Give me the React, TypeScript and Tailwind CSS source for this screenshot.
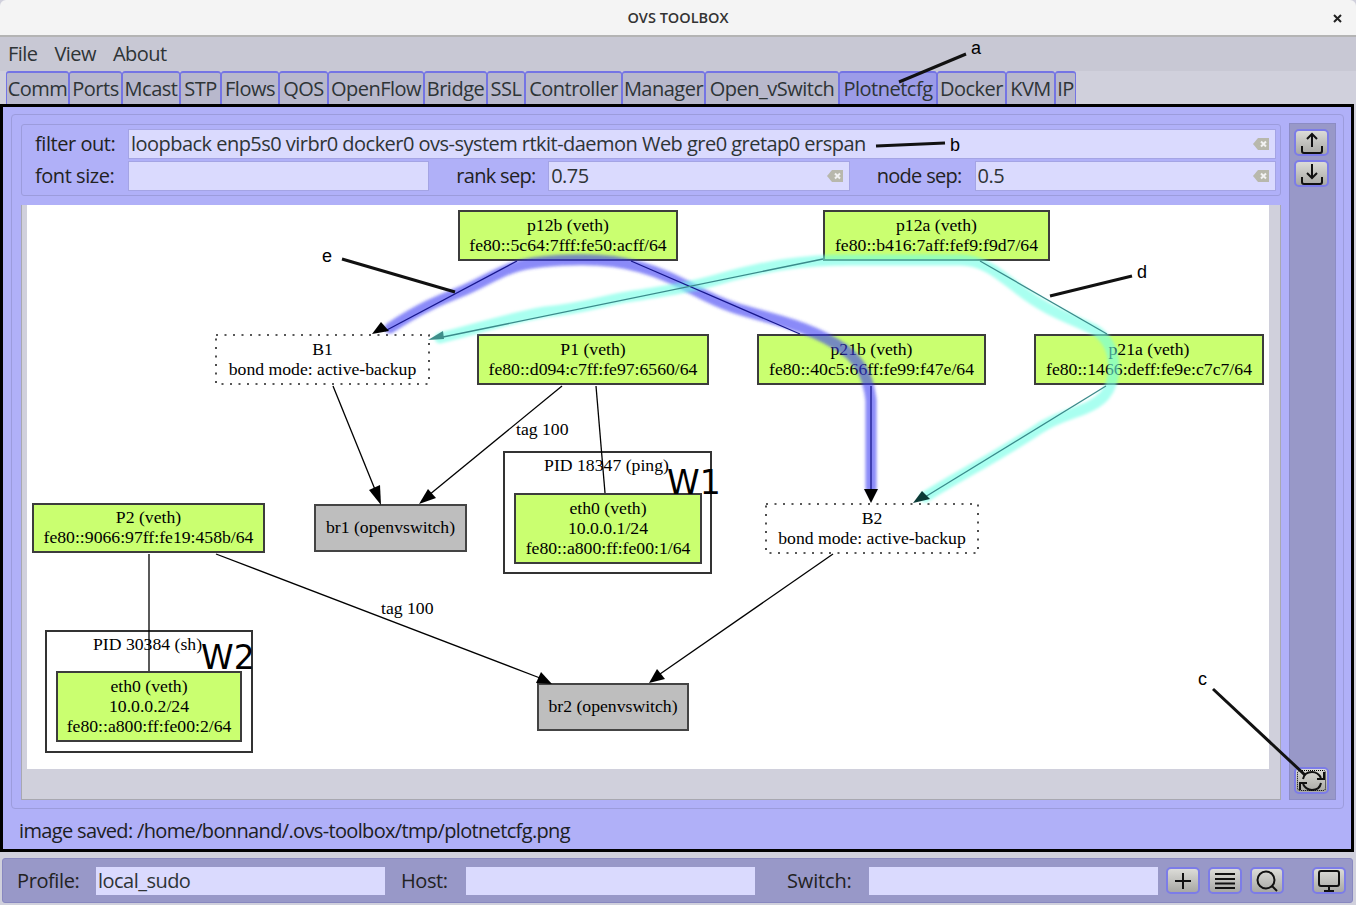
import React from "react";

const ui = "font-['Open_Sans',sans-serif]";
const serif = "text-[17.7px] leading-[20px] text-black font-['Liberation_Serif',serif]";
const tabs: [string, string, boolean?][] = [
  ["Comm", "w-[63px]"], ["Ports", "w-[53px]"], ["Mcast", "w-[58px]"], ["STP", "w-[41px]"], ["Flows", "w-[58px]"],
  ["QOS", "w-[49px]"], ["OpenFlow", "w-[96px]"], ["Bridge", "w-[63px]"], ["SSL", "w-[38px]"], ["Controller", "w-[97px]"],
  ["Manager", "w-[83px]"], ["Open_vSwitch", "w-[134px]"], ["Plotnetcfg", "w-[98px]", true], ["Docker", "w-[69px]"], ["KVM", "w-[49px]"], ["IP", "w-[21px]"],
];

function Clear() {
  return (
    <svg width="16" height="12" viewBox="0 0 16 12" className="absolute right-[6px] top-1/2 -translate-y-1/2">
      <path d="M5 0H16V12H5L0 6Z" fill="#b8b8ac" />
      <path d="M8 3.5L13 8.5M13 3.5L8 8.5" stroke="#f2f2f2" strokeWidth="2" />
    </svg>
  );
}

function Field({ w, value, clear = true, h = "h-[30px]", edge = "border border-[#a4a4e4]" }: { w: string; value?: string; clear?: boolean; h?: string; edge?: string }) {
  return (
    <div className={`relative ${w} ${h} bg-[#dadafe] ${edge} pl-[2px] text-[20px] leading-[28px] text-[#2e3436] ${ui} whitespace-nowrap tracking-[-0.53px]`}>
      {value}
      {clear && <Clear />}
    </div>
  );
}

function IconBtn({ w = "w-[35px]", h = "h-[27px]", focus, children }: { w?: string; h?: string; focus?: boolean; children: React.ReactNode }) {
  return (
    <div className={`${w} ${h} rounded-[5px] border-2 border-[#7c7ce8] bg-gradient-to-b from-[#dcdcd8] to-[#a8a8a4] flex items-center justify-center relative`}>
      {focus && <div className="absolute inset-[1px] border border-dotted border-black rounded-[3px]" />}
      {children}
    </div>
  );
}

function Node({ pos, kind = "green", title, lines, w = 0, h = 0 }: { pos: string; kind?: "green" | "gray" | "dot"; title: string; lines?: string[]; w?: number; h?: number }) {
  const k =
    kind === "green"
      ? "bg-[#caff70] border-2 border-[#3c3c3c]"
      : kind === "gray"
      ? "bg-[#bebebe] border-2 border-[#444]"
      : "";
  return (
    <div className={`absolute ${pos} ${k} flex flex-col items-center justify-center pb-[2px] ${serif} whitespace-nowrap`}>
      {kind === "dot" && (
        <svg className="absolute inset-0" width={w} height={h} fill="none">
          <rect x="1" y="1" width={w - 2} height={h - 2} stroke="#222" strokeWidth="1.6" strokeDasharray="2 6.5" />
        </svg>
      )}
      <div>{title}</div>
      {lines?.map((l) => <div key={l}>{l}</div>)}
    </div>
  );
}

function Graph() {
  return (
    <div className="relative w-[1242px] h-[564px] bg-white overflow-hidden">
      {/* cluster boxes */}
      <div className="absolute left-[476px] top-[246px] w-[209px] h-[123px] border-2 border-[#333]" />
      <div className="absolute left-[18px] top-[425px] w-[208px] h-[123px] border-2 border-[#333]" />
      <div className={`absolute left-[477px] top-[250px] w-[205px] text-center ${serif}`}>PID 18347 (ping)</div>
      <div className={`absolute left-[18px] top-[429px] w-[205px] text-center ${serif}`}>PID 30384 (sh)</div>
      <div className="absolute left-[640px] top-[255px] text-[33px] leading-[46px] font-['DejaVu_Sans',sans-serif] text-black z-10">W1</div>
      <div className="absolute left-[174px] top-[430px] text-[33px] leading-[46px] font-['DejaVu_Sans',sans-serif] text-black z-10">W2</div>

      <Node pos="left-[431px] top-[5px] w-[220px] h-[51px]" title="p12b (veth)" lines={["fe80::5c64:7fff:fe50:acff/64"]} />
      <Node pos="left-[796px] top-[5px] w-[227px] h-[51px]" title="p12a (veth)" lines={["fe80::b416:7aff:fef9:f9d7/64"]} />
      <Node pos="left-[188px] top-[129px] w-[215px] h-[51px]" kind="dot" w={215} h={51} title="B1" lines={["bond mode: active-backup"]} />
      <Node pos="left-[450px] top-[129px] w-[232px] h-[51px]" title="P1 (veth)" lines={["fe80::d094:c7ff:fe97:6560/64"]} />
      <Node pos="left-[730px] top-[129px] w-[229px] h-[51px]" title="p21b (veth)" lines={["fe80::40c5:66ff:fe99:f47e/64"]} />
      <Node pos="left-[1007px] top-[129px] w-[230px] h-[51px]" title="p21a (veth)" lines={["fe80::1466:deff:fe9e:c7c7/64"]} />
      <Node pos="left-[487px] top-[288px] w-[188px] h-[71px]" title="eth0 (veth)" lines={["10.0.0.1/24", "fe80::a800:ff:fe00:1/64"]} />
      <Node pos="left-[287px] top-[299px] w-[153px] h-[48px]" kind="gray" title="br1 (openvswitch)" />
      <Node pos="left-[5px] top-[298px] w-[233px] h-[50px]" title="P2 (veth)" lines={["fe80::9066:97ff:fe19:458b/64"]} />
      <Node pos="left-[738px] top-[298px] w-[214px] h-[51px]" kind="dot" w={214} h={51} title="B2" lines={["bond mode: active-backup"]} />
      <Node pos="left-[29px] top-[466px] w-[186px] h-[71px]" title="eth0 (veth)" lines={["10.0.0.2/24", "fe80::a800:ff:fe00:2/64"]} />
      <Node pos="left-[510px] top-[478px] w-[152px] h-[48px]" kind="gray" title="br2 (openvswitch)" />

      <div className={`absolute left-[489px] top-[214px] ${serif}`}>tag 100</div>
      <div className={`absolute left-[354px] top-[393px] ${serif}`}>tag 100</div>

      <svg className="absolute inset-0 z-20" width="1242" height="564" viewBox="27 205 1242 564" fill="none">
        <defs>
          <filter id="soft" x="-10%" y="-10%" width="120%" height="120%"><feGaussianBlur stdDeviation="1.4" /></filter>
        </defs>
        <g stroke="#000" strokeWidth="1.3">
          <path d="M333 386L376 492" />
          <path d="M562 386L429 495" />
          <path d="M596 386L605 493" />
          <path d="M149 554V671" />
          <path d="M216 554L540 678" />
          <path d="M833 554L660 674" />
        </g>
        <g fill="#000">
          <path d="M381 505L369 490L380 485Z" />
          <path d="M419 504L428 489L436 498Z" />
          <path d="M552 684L536 683L541 672Z" />
          <path d="M649 683L657 669L665 679Z" />
        </g>
        <path d="M390 328C420 308 440 300 460 292C490 280 505 265 540 262C570 259 610 258 640 267C680 278 700 297 735 308C770 319 810 325 845 350C860 362 868 375 871 400V488" stroke="#3c3cf3" strokeOpacity="0.6" strokeWidth="11" filter="url(#soft)" strokeLinecap="round" />
        <path d="M440 338C480 328 510 318 545 312C590 308 610 298 640 295C670 290 690 288 730 276C770 266 800 260 850 260H960C985 260 1000 275 1020 290C1045 310 1070 318 1095 330C1118 345 1118 378 1105 395C1090 412 1065 412 1040 428C1000 455 960 475 925 497" stroke="#71ffe6" strokeOpacity="0.6" strokeWidth="11" filter="url(#soft)" strokeLinecap="round" />
        <g stroke="#17178c" strokeWidth="1.3">
          <path d="M517 261L385 331" />
          <path d="M631 261L800 334" />
          <path d="M871 386V490" />
        </g>
        <path d="M372 334L381 322L389 331Z" fill="#000" />
        <path d="M864 489H878L871 503Z" fill="#000" />
        <g stroke="#3a8a8a" strokeWidth="1.3">
          <path d="M823 259L443 337" />
          <path d="M980 261L1107 334" />
          <path d="M1106 386L925 497" />
        </g>
        <path d="M428 340L443 331L444 339Z" fill="#3e8e8a" />
        <path d="M913 503L922 491L930 499Z" fill="#0b3a36" />
      </svg>
    </div>
  );
}

export default function App() {
  return (
    <div className={`relative w-[1356px] h-[905px] overflow-hidden bg-[#d0d0dc] ${ui} text-[#2e3436]`}>
      {/* title bar */}
      <div className="relative h-[37px] bg-[#f4f4f4] border-b-2 border-[#b4b4b4] flex items-center justify-center rounded-t-[6px]">
        <span className="text-[14.5px] font-semibold text-[#333]">OVS TOOLBOX</span>
        <svg className="absolute right-[14px] top-[14px]" width="9" height="9" viewBox="0 0 9 9"><path d="M1 1L8 8M8 1L1 8" stroke="#222" strokeWidth="2" /></svg>
      </div>
      {/* menu */}
      <div className="h-[34px] bg-[#c8c8d4] flex items-center pl-[8px] gap-[17px] text-[20px] tracking-[-0.55px]">
        <span>File</span><span>View</span><span>About</span>
      </div>
      {/* tabs */}
      <div className="h-[33px] pl-[6px] flex items-end">
        {tabs.map(([t, w, active]) => (
          <div key={t} className={`${w} h-[33px] shrink-0 border-x border-t-2 border-[#7474e4] rounded-t-[3px] flex items-center justify-center text-[20px] tracking-[-0.5px] whitespace-nowrap ${active ? "bg-[#9c9ce8]" : "bg-[#b8b8cc]"}`}>{t}</div>
        ))}
      </div>
      {/* main panel */}
      <div className="w-[1354px] h-[748px] border-[3px] border-black bg-[#b0b0f8] pl-[8px] pt-[7px]">
        <div className="w-[1333px] h-[695px] border border-[#9c9cdc] rounded-[4px] pl-[9px] pt-[9px] flex gap-[8px]">
          <div className="w-[1260px] flex flex-col gap-[9px]">
            <div className="h-[72px] border border-[#9c9cdc] rounded-[3px] pl-[13px] pr-[4px] pt-[4px] flex flex-col gap-[2px] text-[20px] text-[#222] tracking-[-0.45px]">
              <div className="flex items-center h-[30px]">
                <span className="w-[93px]">filter out:</span>
                <Field w="w-[1148px]" value="loopback enp5s0 virbr0 docker0 ovs-system rtkit-daemon Web gre0 gretap0 erspan" />
              </div>
              <div className="flex items-center h-[30px]">
                <span className="w-[93px]">font size:</span>
                <Field w="w-[302px]" clear={false} />
                <span className="ml-[27px] w-[92px] tracking-[-0.7px]">rank sep:</span>
                <Field w="w-[302px]" value="0.75" />
                <span className="ml-[27px] w-[98px] tracking-[-0.7px]">node sep:</span>
                <Field w="w-[302px]" value="0.5" />
              </div>
            </div>
            <div className="h-[595px] bg-[#d0d0dc] border-r border-b border-l border-[#a8a8b0] pl-[5px]">
              <Graph />
            </div>
          </div>
          <div className="w-[47px] h-[677px] -mt-[1px] bg-[#9898c8] border border-[#8c8cc4] pt-[5px] pl-[4px] flex flex-col">
            <div className="flex flex-col gap-[4px]">
              <IconBtn>
                <svg width="24" height="24" viewBox="0 0 24 24" fill="none" stroke="#111" strokeWidth="2"><path d="M12 16V3M7 8l5-5 5 5M2 15v5a2 2 0 0 0 2 2h16a2 2 0 0 0 2-2v-5" /></svg>
              </IconBtn>
              <IconBtn>
                <svg width="24" height="24" viewBox="0 0 24 24" fill="none" stroke="#111" strokeWidth="2"><path d="M12 2v14M7 11l5 5 5-5M2 15v5a2 2 0 0 0 2 2h16a2 2 0 0 0 2-2v-5" /></svg>
              </IconBtn>
            </div>
            <div className="mt-auto mb-[5px]">
              <IconBtn focus>
                <svg width="26" height="22" viewBox="0 0 26 22" fill="none" stroke="#111" strokeWidth="2"><path d="M4 9C5 4 9 2 13 2c4 0 7 2 9 6" /><path d="M22 13c-1 5-5 7-9 7-4 0-7-2-9-6" /><path d="M25 2v7h-7M1 20v-7h7" /></svg>
              </IconBtn>
            </div>
          </div>
        </div>
        <div className="mt-[9px] ml-[8px] text-[20px] leading-[26px] text-[#1c2022] tracking-[-0.65px]">image saved: /home/bonnand/.ovs-toolbox/tmp/plotnetcfg.png</div>
      </div>
      {/* bottom bar */}
      <div className="mt-[6px] ml-[2px] w-[1351px] h-[45px] bg-[#9898c8] border border-[#8888c0] rounded-[3px] flex items-center text-[20px] text-[#222] tracking-[-0.4px]">
        <span className="ml-[14px] w-[79px]">Profile:</span>
        <Field w="w-[289px]" h="h-[28px]" value="local_sudo" clear={false} edge="" />
        <span className="ml-[16px] w-[65px]">Host:</span>
        <Field w="w-[289px]" h="h-[28px]" clear={false} edge="" />
        <span className="ml-[32px] w-[82px] tracking-[-0.15px]">Switch:</span>
        <Field w="w-[289px]" h="h-[28px]" clear={false} edge="" />
        <div className="ml-[8px] flex gap-[8px]">
          <IconBtn w="w-[34px]">
            <svg width="20" height="20" viewBox="0 0 20 20" stroke="#111" strokeWidth="2"><path d="M10 2V18M2 10H18" /></svg>
          </IconBtn>
          <IconBtn w="w-[34px]">
            <svg width="22" height="20" viewBox="0 0 22 20" stroke="#111" strokeWidth="2"><path d="M1 3H21M1 8H21M1 12.5H21M1 17H21" /></svg>
          </IconBtn>
          <IconBtn w="w-[34px]">
            <svg width="24" height="24" viewBox="0 0 24 24" fill="none" stroke="#111" strokeWidth="2"><circle cx="11" cy="11" r="8.5" /><path d="M17 17l5 5" /></svg>
          </IconBtn>
        </div>
        <div className="ml-[28px]">
          <IconBtn w="w-[34px]">
            <svg width="24" height="24" viewBox="0 0 24 24" fill="none" stroke="#111" strokeWidth="2"><rect x="2" y="2" width="20" height="15" rx="2" /><path d="M12 17v4M7 22h10" /></svg>
          </IconBtn>
        </div>
      </div>

      {/* annotations drawn over the screenshot */}
      <svg className="absolute inset-0 z-30 pointer-events-none" width="1356" height="905" stroke="#111" strokeWidth="3" fill="none">
        <path d="M899 82L966 54" />
        <path d="M876 146L945 143" />
        <path d="M1213 689L1305 775" />
        <path d="M1050 296L1132 276" />
        <path d="M342 259L455 292" />
      </svg>
      {([
        ["a", "left-[971px] top-[38px]"],
        ["b", "left-[950px] top-[135px]"],
        ["c", "left-[1198px] top-[669px]"],
        ["d", "left-[1137px] top-[262px]"],
        ["e", "left-[322px] top-[246px]"],
      ] as const).map(([t, p]) => (
        <span key={t} className={`absolute ${p} z-30 text-[18px] leading-[20px] text-black font-['Liberation_Sans',sans-serif]`}>{t}</span>
      ))}
    </div>
  );
}
